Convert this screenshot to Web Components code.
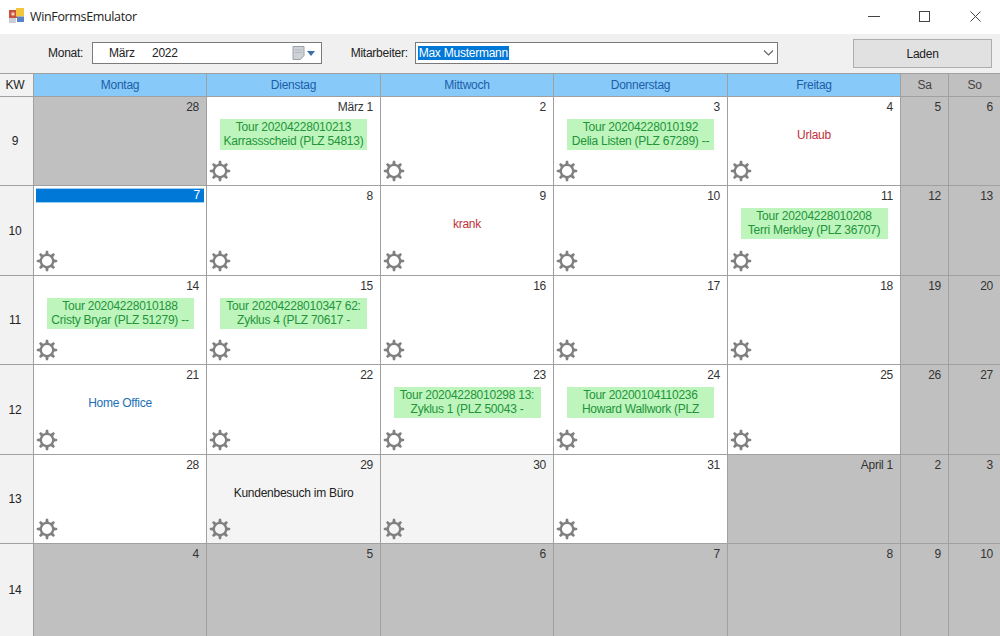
<!DOCTYPE html>
<html lang="de"><head><meta charset="utf-8"><title>WinFormsEmulator</title>
<style>
html,body{margin:0;padding:0;background:#fff;overflow:hidden}
body{width:1000px;height:636px;font:12px "Liberation Sans",Arial,sans-serif;letter-spacing:-.25px;color:#222}
</style></head><body>
<app-window>
<title-bar slot="title">WinFormsEmulator</title-bar>
<tool-bar slot="tools"></tool-bar>
<cal-grid slot="grid" id="g"></cal-grid>
</app-window>
<script>
class AppWindow extends HTMLElement{constructor(){super();this.attachShadow({mode:'open'}).innerHTML=`<style>:host{display:flex;flex-direction:column;width:1000px;height:636px;overflow:hidden}</style><slot name="title"></slot><slot name="tools"></slot><slot name="grid"></slot>`}}
class TitleBar extends HTMLElement{constructor(){super();this.attachShadow({mode:'open'}).innerHTML=`<style>
:host{display:flex;align-items:center;height:34px;flex:none;background:#fff;color:#222;font:12.5px "Open Sans",sans-serif;letter-spacing:-.35px}
.ico{margin:0 6px 3px 9px;display:block}
.t{flex:1;margin-bottom:2px}
.b{width:51px;height:32px;margin-bottom:2px;display:flex;align-items:center;justify-content:center}
</style>
<svg class="ico" width="15" height="15" viewBox="0 0 15 15"><rect x="0" y="2" width="8" height="8" fill="#c8503c"/><rect x="2.5" y="4.5" width="3" height="3" fill="#f3d0c0"/><rect x="7" y="0" width="8" height="8.5" fill="#f2c53d"/><rect x="0" y="10" width="7" height="5" fill="#c9cdd6"/><rect x="8" y="8.5" width="7" height="5.5" fill="#5b83c9"/></svg>
<span class="t"><slot></slot></span>
<span class="b"><svg width="12" height="12" viewBox="0 0 12 12"><path d="M0 6.5h12" stroke="#444" stroke-width="1"/></svg></span>
<span class="b"><svg width="11" height="11" viewBox="0 0 11 11"><rect x=".5" y=".5" width="10" height="10" fill="none" stroke="#444"/></svg></span>
<span class="b" style="width:50px"><svg width="11" height="11" viewBox="0 0 11 11"><path d="M.5.5l10 10M10.5.5l-10 10" stroke="#444" fill="none"/></svg></span>`}}
class ToolBar extends HTMLElement{constructor(){super();this.attachShadow({mode:'open'}).innerHTML=`<style>
:host{display:flex;align-items:center;height:39px;flex:none;background:#f0f0f0;color:#222;box-sizing:border-box;padding:0 8px 2px 48px}
.box{height:22px;box-sizing:border-box;background:#fff;border:1px solid #7a7a7a;display:flex;align-items:center}
.l1{width:35px;white-space:nowrap}.l2{width:55px;margin-left:29px;white-space:nowrap}
.date{width:230px;margin-left:9px;padding:0 5px 0 16px}
.date b{font-weight:400;width:43px}.date i{font-style:normal;flex:1}
.combo{width:364px;margin-left:9px;padding:0 3px 0 2px;justify-content:space-between}
.sel{background:#0078d7;color:#fff;padding:0 1px;height:14px;line-height:14px;display:block}
button{all:unset;font:inherit;letter-spacing:inherit;margin-left:75px;width:139px;height:29px;box-sizing:border-box;background:#e1e1e1;border:1px solid #adadad;text-align:center;color:#222;margin-top:2px}
</style>
<span class="l1">Monat:</span>
<div class="box date"><b>März</b><i>2022</i>
<svg width="24" height="14" viewBox="0 0 24 14"><path d="M1 .5h11v9l-3.500 4H1z" fill="#ced1d6" stroke="#9da1aa"/><path d="M3 4h7M3 6.500h7" stroke="#b5b9c0"/><path d="M15 5h8l-4 5z" fill="#3a6ea5"/></svg></div>
<span class="l2">Mitarbeiter:</span>
<div class="box combo"><span class="sel">Max Mustermann</span>
<svg width="12" height="8" viewBox="0 0 12 8"><path d="M2 1.500l4.500 4.500L11 1.500" fill="none" stroke="#666" stroke-width="1.200"/></svg></div>
<button>Laden</button>`}}
class CalGrid extends HTMLElement{constructor(){super();this.attachShadow({mode:'open'}).innerHTML=`<style>
:host{display:block;flex:none;height:563px;overflow:hidden;background:#c0c0c0}
.g{display:grid;grid-template-columns:33px 173px 174px 173px 174px 173px 48px 52px;grid-template-rows:23px 89px 90px 89px 90px 89px 93px}
</style><div class="g"><slot></slot></div>`}}
class HeadCell extends HTMLElement{constructor(){super();this.attachShadow({mode:'open'}).innerHTML=`<style>
:host{display:flex;align-items:center;justify-content:center;box-sizing:border-box;border-left:1px solid #a0a0a0;border-top:1px solid #a0a0a0;background:#87c9f8;color:#1c5ea8}
:host([kind=we]){background:#c0c0c0;color:#444}
:host([kind=kw]){background:#f2f2f2;color:#222;border-left:0;padding-right:3px}
</style><slot></slot>`}}
class WeekCell extends HTMLElement{constructor(){super();this.attachShadow({mode:'open'}).innerHTML=`<style>
:host{display:flex;align-items:center;justify-content:center;box-sizing:border-box;border-top:1px solid #a0a0a0;background:#f2f2f2;color:#222;padding-right:3px}
</style><slot></slot>`}}
class GearIcon extends HTMLElement{constructor(){super();let t='';for(let i=0;i<8;i++)t+=`<path d="M9.900 .8h2.200l.8 4.700h-3.800z" transform="rotate(${i*45} 11 11)"/>`;
this.attachShadow({mode:'open'}).innerHTML=`<style>:host{display:block;width:22px;height:22px}svg{display:block}</style><svg width="22" height="22" viewBox="0 0 22 22"><circle cx="11" cy="11" r="6.200" fill="none" stroke="#808080" stroke-width="2.300"/><g fill="#808080">${t}</g></svg>`}}
class CalCell extends HTMLElement{constructor(){super();this.attachShadow({mode:'open'}).innerHTML=`<style>
:host{display:flex;flex-direction:column;box-sizing:border-box;border-left:1px solid #a0a0a0;border-top:1px solid #a0a0a0;background:#fff;min-width:0;overflow:hidden}
:host([off]){background:#c0c0c0}
:host([soft]){background:#f4f4f4}
.d{flex:none;height:22px;box-sizing:border-box;padding:2px 7px 0 0;text-align:right;line-height:17px;color:#333}
:host([today]) .d{height:15px;margin:2px 2px 5px 2px;padding:0 4px 0 0;line-height:13px;background:#0078d7;color:#fff;border:1px solid #99ccee;border-width:1px 0}
.body{flex:none;height:31px;display:flex;align-items:center;justify-content:center}
.g{margin:auto 0 3px 2px}
</style><div class="d"></div><div class="body"><slot></slot></div><div class="g"></div>`;}
connectedCallback(){this.shadowRoot.querySelector('.d').textContent=this.getAttribute('date');if(this.hasAttribute('gear')&&!this.shadowRoot.querySelector('gear-icon'))this.shadowRoot.querySelector('.g').append(document.createElement('gear-icon'))}}
class TourChip extends HTMLElement{constructor(){super();this.attachShadow({mode:'open'}).innerHTML=`<style>
:host{display:block;width:147px;height:31px;box-sizing:border-box;background:#bdf5bd;color:#23943a;text-align:center;line-height:14px;padding-top:1px;overflow:hidden;white-space:pre-line}
</style><slot></slot>`}}
class DayNote extends HTMLElement{constructor(){super();this.attachShadow({mode:'open'}).innerHTML=`<style>:host{display:block;color:var(--c,#222)}</style><slot></slot>`}}
[['app-window',AppWindow],['title-bar',TitleBar],['tool-bar',ToolBar],['cal-grid',CalGrid],['head-cell',HeadCell],['week-cell',WeekCell],['gear-icon',GearIcon],['cal-cell',CalCell],['tour-chip',TourChip],['day-note',DayNote]].forEach(([n,c])=>customElements.define(n,c));
const g=document.getElementById('g');
const heads=[['KW','kw'],['Montag'],['Dienstag'],['Mittwoch'],['Donnerstag'],['Freitag'],['Sa','we'],['So','we']];
heads.forEach(([t,k])=>{const h=document.createElement('head-cell');h.textContent=t;if(k)h.setAttribute('kind',k);g.append(h)});
const R='#c0303a',B='#1c70b8';
const chip=(a,b)=>({chip:a+'\n'+b});
const weeks=[
[9,[{d:'28',off:1},{d:'März 1',c:chip('Tour 20204228010213','Karrassscheid (PLZ 54813)')},{d:'2'},{d:'3',c:chip('Tour 20204228010192','Delia Listen (PLZ 67289) --')},{d:'4',c:{note:'Urlaub',col:R}},{d:'5',off:1},{d:'6',off:1}]],
[10,[{d:'7',today:1},{d:'8'},{d:'9',c:{note:'krank',col:R}},{d:'10'},{d:'11',c:chip('Tour 20204228010208','Terri Merkley (PLZ 36707)')},{d:'12',off:1},{d:'13',off:1}]],
[11,[{d:'14',c:chip('Tour 20204228010188','Cristy Bryar (PLZ 51279) --')},{d:'15',c:chip('Tour 20204228010347 62:','Zyklus 4 (PLZ 70617 -')},{d:'16'},{d:'17'},{d:'18'},{d:'19',off:1},{d:'20',off:1}]],
[12,[{d:'21',c:{note:'Home Office',col:B}},{d:'22'},{d:'23',c:chip('Tour 20204228010298 13:','Zyklus 1 (PLZ 50043 -')},{d:'24',c:chip('Tour 20200104110236','Howard Wallwork (PLZ')},{d:'25'},{d:'26',off:1},{d:'27',off:1}]],
[13,[{d:'28'},{d:'29',soft:1,c:{note:'Kundenbesuch im Büro',col:'#222'}},{d:'30',soft:1},{d:'31'},{d:'April 1',off:1},{d:'2',off:1},{d:'3',off:1}]],
[14,[{d:'4',off:1},{d:'5',off:1},{d:'6',off:1},{d:'7',off:1},{d:'8',off:1},{d:'9',off:1},{d:'10',off:1}]]];
weeks.forEach(([kw,days])=>{const w=document.createElement('week-cell');w.textContent=kw;g.append(w);
days.forEach(x=>{const c=document.createElement('cal-cell');c.setAttribute('date',x.d);
if(x.off)c.setAttribute('off','');else c.setAttribute('gear','');
if(x.soft)c.setAttribute('soft','');if(x.today)c.setAttribute('today','');
if(x.c&&x.c.chip){const t=document.createElement('tour-chip');t.textContent=x.c.chip;c.append(t)}
if(x.c&&x.c.note){const t=document.createElement('day-note');t.textContent=x.c.note;t.style.setProperty('--c',x.c.col);c.append(t)}
g.append(c)})});
</script></body></html>
